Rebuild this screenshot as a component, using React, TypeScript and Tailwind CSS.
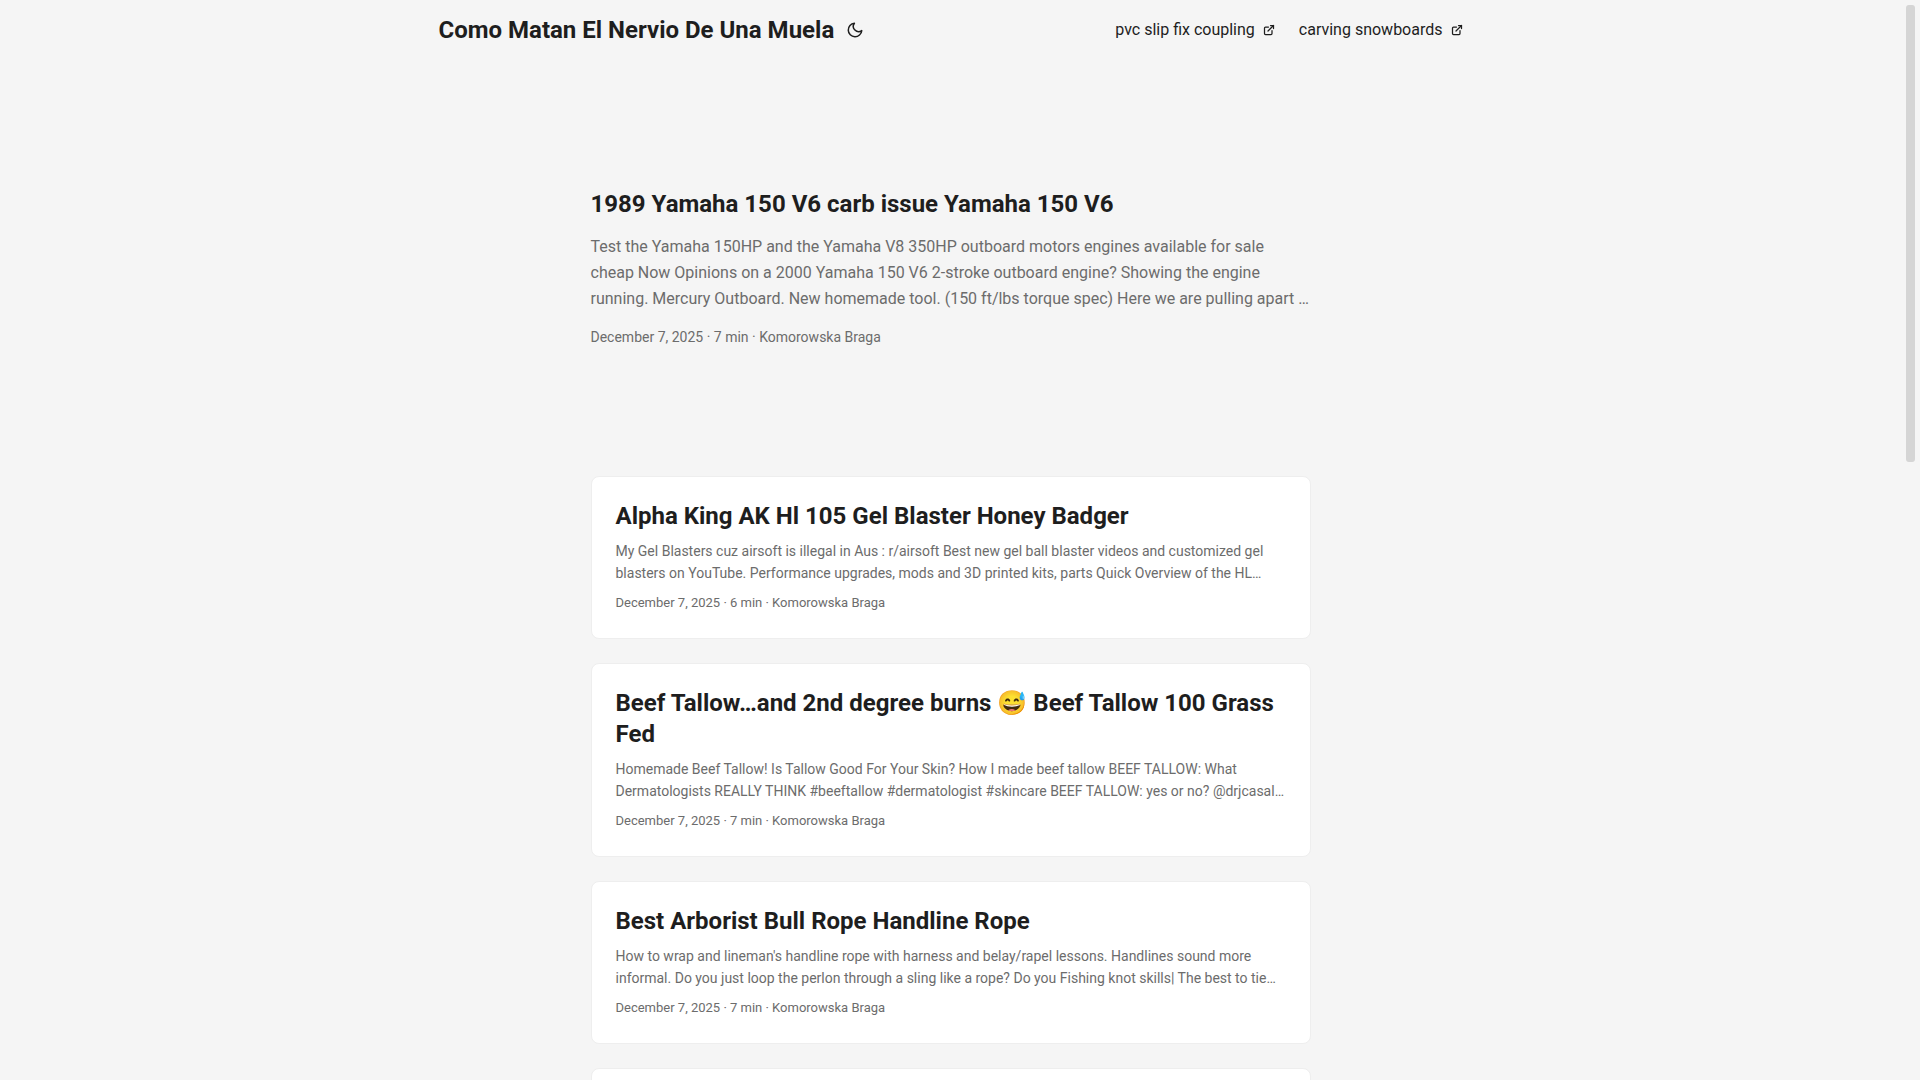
const menu = [
  { name: 'pvc slip fix coupling', href: '#pvc-slip-fix-coupling' },
  { name: 'carving snowboards', href: '#carving-snowboards' },
]

const featured = {
  title: '1989 Yamaha 150 V6 carb issue Yamaha 150 V6',
  summary:
    'Test the Yamaha 150HP and the Yamaha V8 350HP outboard motors engines available for sale cheap Now Opinions on a 2000 Yamaha 150 V6 2-stroke outboard engine? Showing the engine running. Mercury Outboard. New homemade tool. (150 ft/lbs torque spec) Here we are pulling apart …',
  meta: 'December 7, 2025 · 7 min · Komorowska Braga',
}

const posts = [
  {
    title: 'Alpha King AK Hl 105 Gel Blaster Honey Badger',
    summary:
      'My Gel Blasters cuz airsoft is illegal in Aus : r/airsoft Best new gel ball blaster videos and customized gel blasters on YouTube. Performance upgrades, mods and 3D printed kits, parts Quick Overview of the HL…',
    meta: 'December 7, 2025 · 6 min · Komorowska Braga',
  },
  {
    title: 'Beef Tallow…and 2nd degree burns 😅 Beef Tallow 100 Grass Fed',
    summary:
      'Homemade Beef Tallow! Is Tallow Good For Your Skin? How I made beef tallow BEEF TALLOW: What Dermatologists REALLY THINK #beeftallow #dermatologist #skincare BEEF TALLOW: yes or no? @drjcasal…',
    meta: 'December 7, 2025 · 7 min · Komorowska Braga',
  },
  {
    title: 'Best Arborist Bull Rope Handline Rope',
    summary:
      "How to wrap and lineman's handline rope with harness and belay/rapel lessons. Handlines sound more informal. Do you just loop the perlon through a sling like a rope? Do you Fishing knot skills| The best to tie…",
    meta: 'December 7, 2025 · 7 min · Komorowska Braga',
  },
]

function MoonIcon() {
  return (
    <svg width="18" height="18" viewBox="0 0 24 24" fill="none" stroke="currentColor" strokeWidth="2" strokeLinecap="round" strokeLinejoin="round" aria-hidden="true">
      <path d="M21 12.79A9 9 0 1 1 11.21 3 7 7 0 0 0 21 12.79z" />
    </svg>
  )
}

function ExternalIcon() {
  return (
    <svg width="12" height="12" viewBox="0 0 24 24" fill="none" stroke="currentColor" strokeWidth="2.5" strokeLinecap="round" strokeLinejoin="round" shapeRendering="geometricPrecision" aria-hidden="true">
      <path d="M18 13v6a2 2 0 01-2 2H5a2 2 0 01-2-2V8a2 2 0 012-2h6" />
      <path d="M15 3h6v6" />
      <path d="M10 14L21 3" />
    </svg>
  )
}

function Header() {
  return (
    <header className="mx-auto flex max-w-[1072px] flex-wrap justify-between px-6">
      <div className="flex items-center gap-3">
        <a href="#home" className="text-2xl font-bold leading-[60px]">
          Como Matan El Nervio De Una Muela
        </a>
        <button type="button" aria-label="Toggle theme" className="flex h-[60px] items-center">
          <MoonIcon />
        </button>
      </div>
      <nav>
        <ul className="flex gap-6">
          {menu.map((item) => (
            <li key={item.name}>
              <a href={item.href} className="flex items-center gap-2 text-base leading-[60px]">
                {item.name}
                <ExternalIcon />
              </a>
            </li>
          ))}
        </ul>
      </nav>
    </header>
  )
}

export default function App() {
  return (
    <div className="flex h-screen bg-[#f5f5f5] font-['Roboto',sans-serif] text-[#1e1e1e]">
      <div className="flex-1 overflow-y-auto [scrollbar-width:none]">
        <Header />
        <main className="mx-auto max-w-[768px] p-6">
          <article className="mt-6 mb-12 flex min-h-80 flex-col justify-center">
            <h1 className="text-2xl font-bold leading-[31px]">
              <a href="#featured">{featured.title}</a>
            </h1>
            <p className="my-3.5 text-base leading-[26px] text-[#6c6c6c]">{featured.summary}</p>
            <footer className="text-sm leading-[22px] text-[#6c6c6c]">{featured.meta}</footer>
          </article>

          {posts.map((post) => (
            <article key={post.title} className="mb-6 rounded-lg border border-[#eee] bg-white p-6">
              <h2 className="text-2xl font-bold leading-[31px]">
                <a href="#post">{post.title}</a>
              </h2>
              <p className="my-2 text-sm leading-[22px] text-[#6c6c6c]">{post.summary}</p>
              <footer className="text-[13px] leading-[22px] text-[#6c6c6c]">{post.meta}</footer>
            </article>
          ))}
          <article className="h-40 rounded-lg border border-[#eee] bg-white" />
        </main>
      </div>

      {/* scroll track */}
      <div className="w-[19px] shrink-0 p-[5px]" aria-hidden="true">
        <div className="h-[457px] rounded-[3px] bg-[#d5d5d5]" />
      </div>
    </div>
  )
}
